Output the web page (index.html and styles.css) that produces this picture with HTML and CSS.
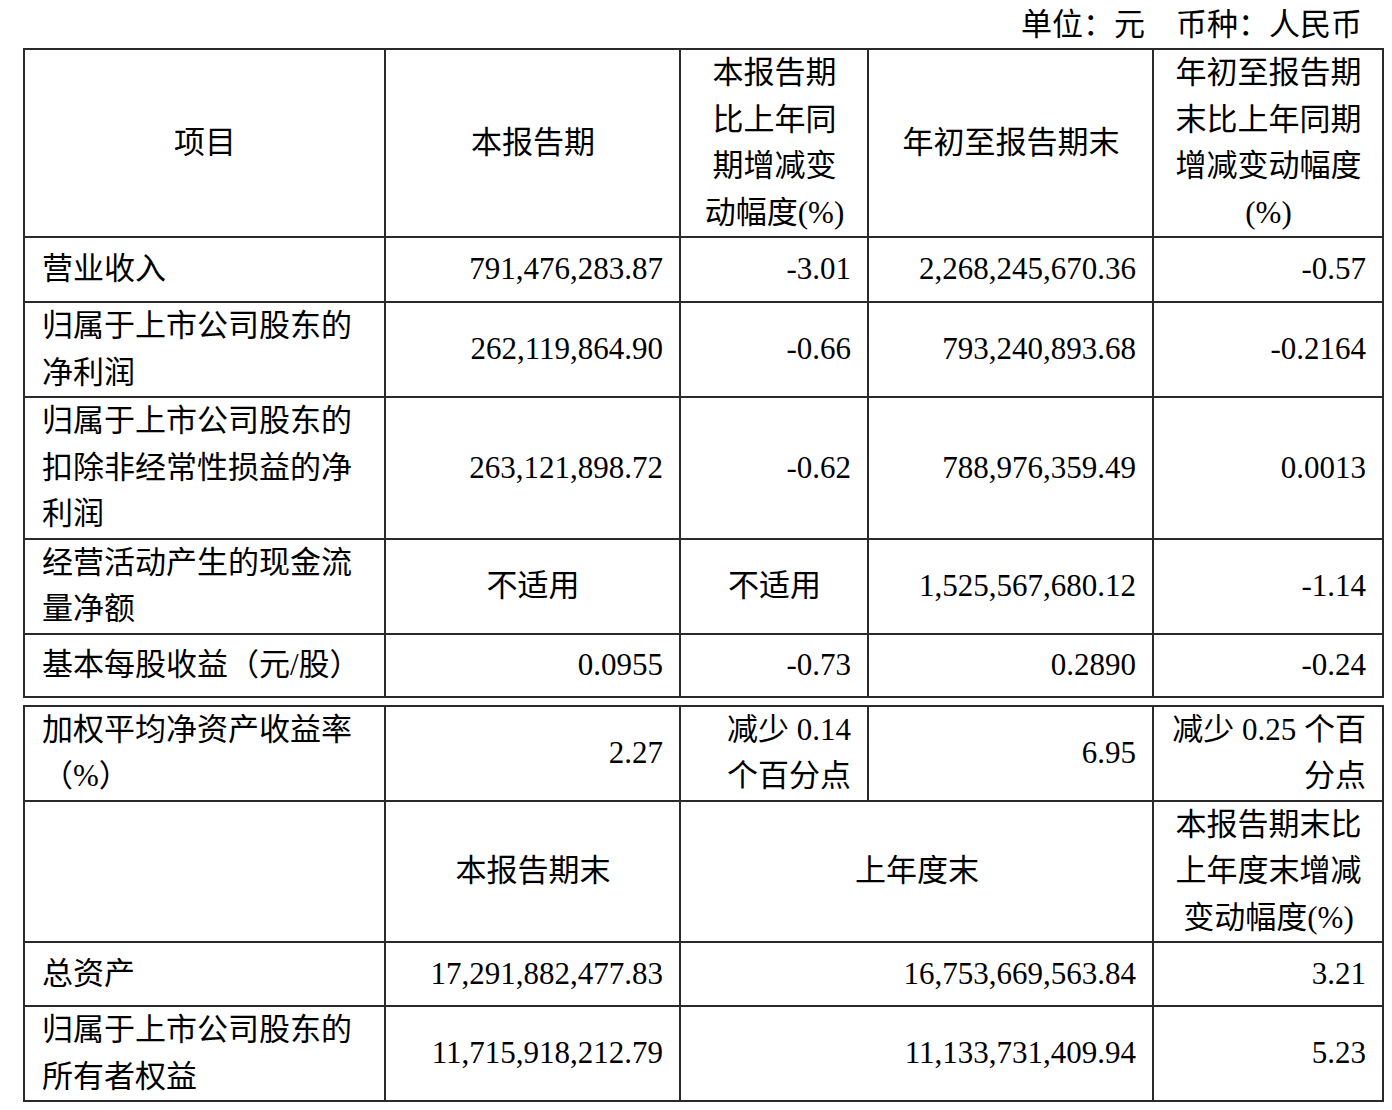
FILE: index.html
```html
<!DOCTYPE html>
<html lang="zh-CN">
<head>
<meta charset="utf-8">
<title>主要会计数据和财务指标</title>
<link rel="stylesheet" href="styles.css">
</head>
<body>
<div class="page">
  <div class="unit">单位：元　币种：人民币</div>
  <table class="fin">
    <colgroup>
      <col class="c1"><col class="c2"><col class="c3"><col class="c4"><col class="c5">
    </colgroup>
    <tr class="head">
      <th>项目</th>
      <th>本报告期</th>
      <th>本报告期<br>比上年同<br>期增减变<br>动幅度(%)</th>
      <th>年初至报告期末</th>
      <th>年初至报告期<br>末比上年同期<br>增减变动幅度<br>(%)</th>
    </tr>
    <tr class="r1a">
      <td class="l">营业收入</td>
      <td class="r">791,476,283.87</td>
      <td class="r">-3.01</td>
      <td class="r">2,268,245,670.36</td>
      <td class="r">-0.57</td>
    </tr>
    <tr>
      <td class="l">归属于上市公司股东的<br>净利润</td>
      <td class="r">262,119,864.90</td>
      <td class="r">-0.66</td>
      <td class="r">793,240,893.68</td>
      <td class="r">-0.2164</td>
    </tr>
    <tr>
      <td class="l">归属于上市公司股东的<br>扣除非经常性损益的净<br>利润</td>
      <td class="r">263,121,898.72</td>
      <td class="r">-0.62</td>
      <td class="r">788,976,359.49</td>
      <td class="r">0.0013</td>
    </tr>
    <tr>
      <td class="l">经营活动产生的现金流<br>量净额</td>
      <td class="c">不适用</td>
      <td class="c">不适用</td>
      <td class="r">1,525,567,680.12</td>
      <td class="r">-1.14</td>
    </tr>
    <tr class="r1b">
      <td class="l">基本每股收益（元/股）</td>
      <td class="r">0.0955</td>
      <td class="r">-0.73</td>
      <td class="r">0.2890</td>
      <td class="r">-0.24</td>
    </tr>
  </table>

  <table class="fin second">
    <colgroup>
      <col class="c1"><col class="c2"><col class="c3"><col class="c4"><col class="c5">
    </colgroup>
    <tr>
      <td class="l">加权平均净资产收益率<br>（%）</td>
      <td class="r">2.27</td>
      <td class="r">减少 0.14<br>个百分点</td>
      <td class="r">6.95</td>
      <td class="r">减少 0.25 个百<br>分点</td>
    </tr>
    <tr class="head">
      <td></td>
      <td class="c">本报告期末</td>
      <td class="c" colspan="2">上年度末</td>
      <td class="c">本报告期末比<br>上年度末增减<br>变动幅度(%)</td>
    </tr>
    <tr class="r1c">
      <td class="l">总资产</td>
      <td class="r">17,291,882,477.83</td>
      <td class="r" colspan="2">16,753,669,563.84</td>
      <td class="r">3.21</td>
    </tr>
    <tr>
      <td class="l">归属于上市公司股东的<br>所有者权益</td>
      <td class="r">11,715,918,212.79</td>
      <td class="r" colspan="2">11,133,731,409.94</td>
      <td class="r">5.23</td>
    </tr>
  </table>
</div>
</body>
</html>
```

FILE: styles.css
```css
html, body {
  margin: 0;
  padding: 0;
  background: #ffffff;
}

body {
  font-family: "Liberation Serif", "Noto Sans CJK SC", serif;
  font-size: 31px;
  color: #000000;
}

.page {
  padding: 0 10px 0 23px;
  width: 1359px;
}

.unit {
  height: 48px;
  line-height: 46px;
  padding-top: 2px;
  box-sizing: border-box;
  text-align: right;
  padding-right: 20px;
}

.fin {
  border-collapse: collapse;
  table-layout: fixed;
  width: 1359px;
}

.second {
  margin-top: 7px;
}

.c1 { width: 361px; }
.c2 { width: 295px; }
.c3 { width: 188px; }
.c4 { width: 285px; }
.c5 { width: 230px; }

.fin th,
.fin td {
  border: 2px solid #2a2a2a;
  padding: 0 16px 0 17px;
  line-height: 46.5px;
  vertical-align: middle;
  font-weight: normal;
  white-space: nowrap;
}

.fin th {
  text-align: center;
}

.l { text-align: left; }
.r { text-align: right; }
.c { text-align: center; }

.r1a td { height: 63px; }
.r1b td { height: 61px; }
.r1c td { height: 62px; }
```
